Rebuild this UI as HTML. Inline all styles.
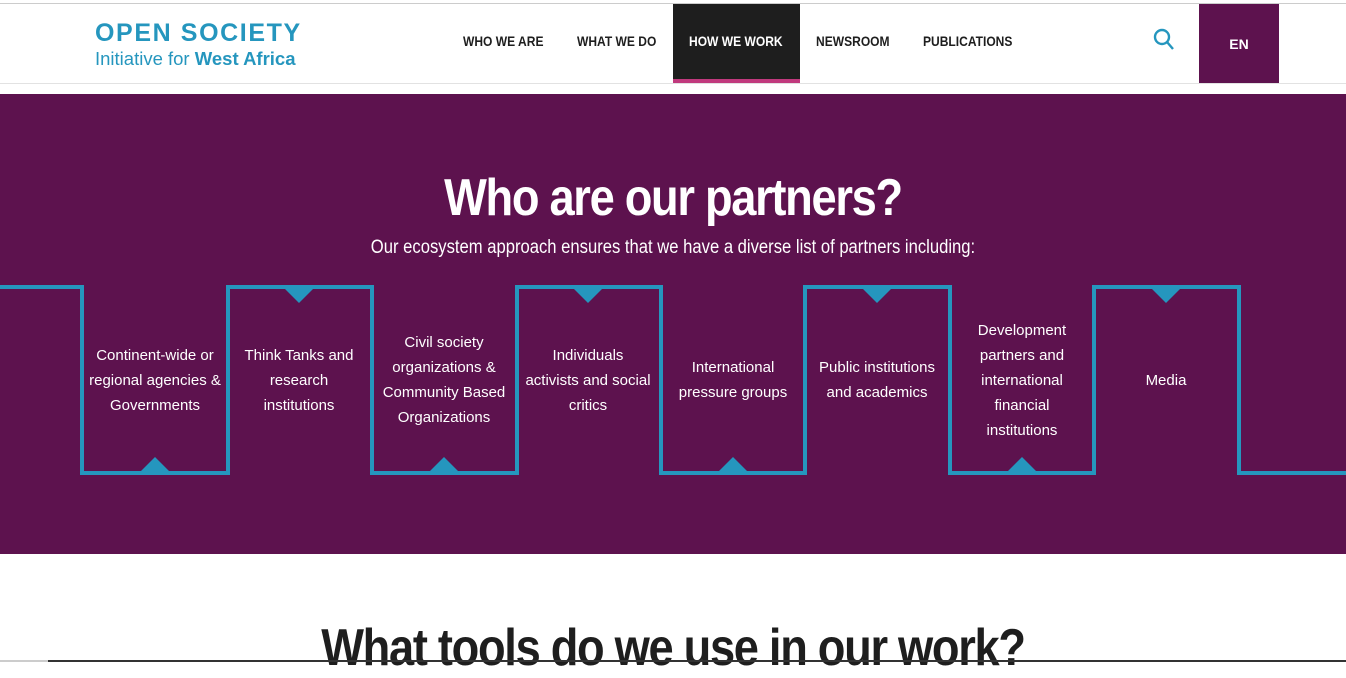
<!DOCTYPE html>
<html><head><meta charset="utf-8"><style>
*{margin:0;padding:0;box-sizing:border-box}
body{width:1346px;height:662px;overflow:hidden;background:#fff;font-family:"Liberation Sans",sans-serif;position:relative}
.abs{position:absolute;white-space:nowrap}
.nav{top:33px;font-size:14px;font-weight:bold;color:#1e1e1e;transform:scaleX(0.86);transform-origin:left center}
.col{position:absolute;top:280px;height:200px;width:144px;display:flex;align-items:center;justify-content:center;text-align:center;color:#fff;font-size:15px;line-height:25px;white-space:nowrap}
.hd{left:0;width:1346px;text-align:center;font-weight:bold;font-size:52px;letter-spacing:-1.5px;transform:scaleX(0.87);transform-origin:center}
</style></head><body>
<div class="abs" style="left:0;top:3px;width:1346px;height:1px;background:#ccc"></div>
<div class="abs" style="left:0;top:83px;width:1346px;height:1px;background:#e2e2e2"></div>
<div class="abs" style="left:95px;top:19px;font-size:25px;letter-spacing:1.6px;color:#2596be;font-weight:bold;">OPEN SOCIETY</div>
<div class="abs" style="left:95px;top:48px;font-size:18.5px;color:#2596be;">Initiative for <span style="font-weight:bold">West Africa</span></div>

<div class="abs" style="left:673px;top:4px;width:127px;height:79px;background:#1e1e1e"></div>
<div class="abs" style="left:673px;top:79px;width:127px;height:4px;background:#c0397d"></div>
<div class="abs nav" style="left:463px">WHO WE ARE</div>
<div class="abs nav" style="left:577px">WHAT WE DO</div>
<div class="abs nav" style="left:689px;color:#fff">HOW WE WORK</div>
<div class="abs nav" style="left:816px">NEWSROOM</div>
<div class="abs nav" style="left:923px">PUBLICATIONS</div>
<svg class="abs" style="left:1150px;top:25px" width="30" height="30"><circle cx="12" cy="12" r="7" fill="none" stroke="#2596be" stroke-width="2.4"/><line x1="17" y1="17" x2="23" y2="24" stroke="#2596be" stroke-width="2.4"/></svg>
<div class="abs" style="left:1199px;top:4px;width:80px;height:79px;background:#5d124e;color:#fff;font-weight:bold;font-size:14px;display:flex;align-items:center;justify-content:center">EN</div>

<div class="abs" style="left:0;top:94px;width:1346px;height:460px;background:#5d124e"></div>
<div class="abs hd" style="top:168px;color:#fff">Who are our partners?</div>
<div class="abs" style="left:0;top:237px;width:1346px;text-align:center;color:#fff;font-size:19px;transform:scaleX(0.875);transform-origin:center">Our ecosystem approach ensures that we have a diverse list of partners including:</div>

<svg class="abs" style="left:0;top:0" width="1346" height="662">
<polyline fill="none" stroke="#2596be" stroke-width="4" points="0,287 82,287 82,473 228,473 228,287 372,287 372,473 517,473 517,287 661,287 661,473 805,473 805,287 950,287 950,473 1094,473 1094,287 1239,287 1239,473 1346,473"/>
<g fill="#2596be">
<polygon points="285,289 313,289 299,303"/><polygon points="574,289 602,289 588,303"/><polygon points="863,289 891,289 877,303"/><polygon points="1152,289 1180,289 1166,303"/>
<polygon points="141,471 169,471 155,457"/><polygon points="430,471 458,471 444,457"/><polygon points="719,471 747,471 733,457"/><polygon points="1008,471 1036,471 1022,457"/>
</g>
</svg>
<div class="col" style="left:83px">Continent-wide or<br>regional agencies &amp;<br>Governments</div>
<div class="col" style="left:227px">Think Tanks and<br>research<br>institutions</div>
<div class="col" style="left:372px">Civil society<br>organizations &amp;<br>Community Based<br>Organizations</div>
<div class="col" style="left:516px">Individuals<br>activists and social<br>critics</div>
<div class="col" style="left:661px">International<br>pressure groups</div>
<div class="col" style="left:805px">Public institutions<br>and academics</div>
<div class="col" style="left:950px">Development<br>partners and<br>international<br>financial<br>institutions</div>
<div class="col" style="left:1094px">Media</div>

<div class="abs hd" style="top:618px;color:#1e1e1e">What tools do we use in our work?</div>
<div class="abs" style="left:0;top:660px;width:1346px;height:2px;background:#ccc"></div>
<div class="abs" style="left:48px;top:660px;width:1298px;height:2px;background:#333"></div>
</body></html>
